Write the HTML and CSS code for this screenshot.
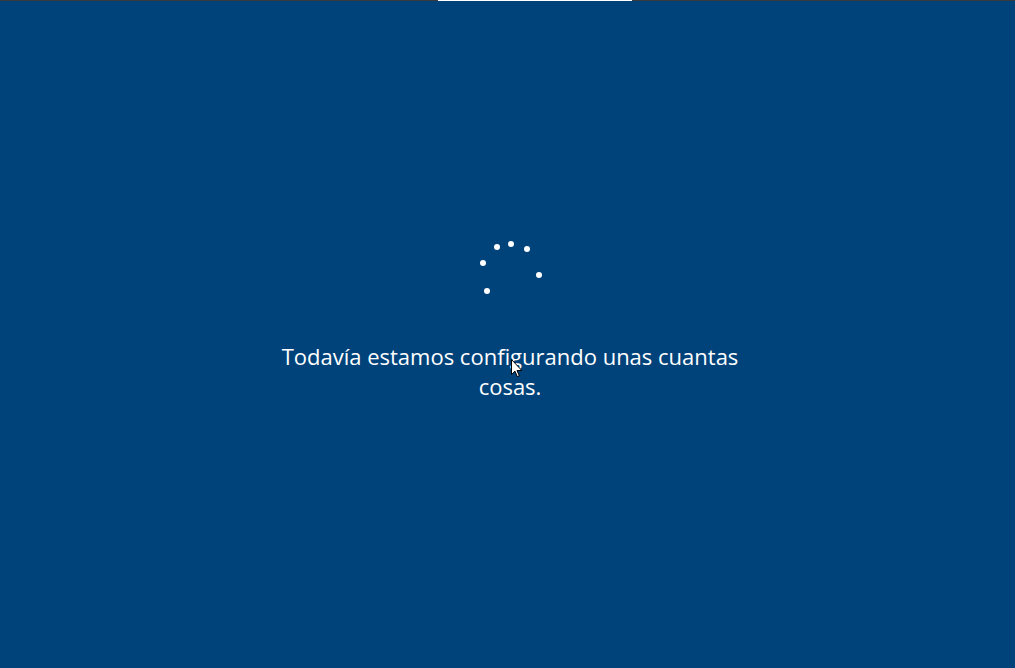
FILE: index.html
```html
<!DOCTYPE html>
<html lang="es">
<head>
<meta charset="utf-8">
<title>Configurando</title>
<link rel="stylesheet" href="styles.css">
</head>
<body>
<div class="topbar"><div class="seg-dark left"></div><div class="seg-light"></div><div class="seg-dark"></div></div>
<main class="stage">
  <div class="spinner">
    <span class="dot" style="left:19px;top:7px"></span>
    <span class="dot" style="left:33px;top:4px"></span>
    <span class="dot" style="left:49px;top:9px"></span>
    <span class="dot" style="left:5px;top:23px"></span>
    <span class="dot" style="left:61px;top:35px"></span>
    <span class="dot" style="left:9px;top:51px"></span>
  </div>
  <p class="message">Todavía estamos configurando unas cuantas cosas.</p>
  <svg class="cursor" width="12" height="19" viewBox="0 0 12 19"><path d="M0.5 0.5 L0.5 15.5 L4 12.2 L6.3 17.6 L8.3 16.8 L6 11.5 L10.8 11.5 Z" fill="#fff" stroke="#000" stroke-width="1"/></svg>
</main>
</body>
</html>
```
FILE: styles.css
```css
html, body {
  margin: 0;
  padding: 0;
  height: 100%;
}
body {
  background: #00437a;
  overflow: hidden;
  font-family: "Open Sans", "Noto Sans", sans-serif;
}
.topbar {
  display: flex;
  height: 1px;
}
.seg-dark {
  flex: 1;
  background: #3a3a3a;
}
.seg-dark.left {
  flex: 0 0 438px;
}
.seg-light {
  flex: 0 0 194px;
  background: #ffffff;
}
.stage {
  position: relative;
  display: flex;
  flex-direction: column;
  align-items: center;
  padding-top: 239px;
}
.spinner {
  position: relative;
  width: 70px;
  height: 60px;
  margin-left: 11px;
}
.dot {
  position: absolute;
  width: 6px;
  height: 6px;
  margin: -3px 0 0 -3px;
  border-radius: 50%;
  background: #fff;
}
.message {
  margin: 41px 0 0 5px;
  width: 480px;
  text-align: center;
  color: #fff;
  font-size: 22px;
  line-height: 30px;
  font-weight: 400;
}
.cursor {
  position: absolute;
  left: 511px;
  top: 358px;
}
```
